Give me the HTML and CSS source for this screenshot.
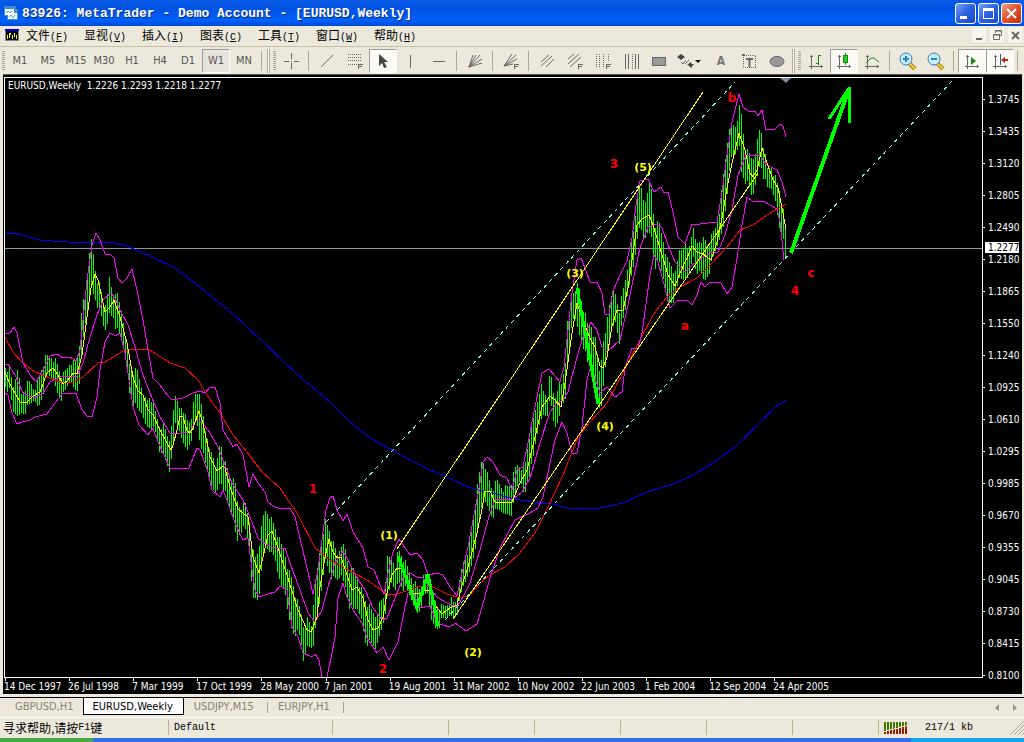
FILE: index.html
```html
<!DOCTYPE html>
<html lang="zh-CN">
<head>
<meta charset="utf-8">
<title>MetaTrader - [EURUSD,Weekly]</title>
<link rel="stylesheet" href="styles.css">
</head>
<body>
<div class="window">
  <header class="titlebar">
    <svg class="app-icon" width="16" height="16" viewBox="0 0 16 16"><path fill="#3a8ed0" d="M1 1h12v3h2v11H4v-4H1z"/><path fill="#fff" d="M2 4h9v6H2zM5 8h9v6H5z"/><path fill="none" stroke="#4aa0d8" d="M3 8l2-2 2 2 2-2M6 12l2-2 2 3 2-3"/></svg>
    <h1 class="title">83926: MetaTrader - Demo Account - [EURUSD,Weekly]</h1>
    <div class="win-buttons">
      <button class="win-btn" aria-label="最小化"><svg width="19" height="19" viewBox="0 0 19 19"><path fill="#fff" d="M4 12h7v3H4z"/></svg></button>
      <button class="win-btn" aria-label="最大化"><svg width="19" height="19" viewBox="0 0 19 19"><path fill="#fff" fill-rule="evenodd" d="M4 4h11v11H4zM5 7v7h9V7z"/></svg></button>
      <button class="win-btn win-close" aria-label="关闭"><svg width="19" height="19" viewBox="0 0 19 19"><path stroke="#fff" stroke-width="2" d="M5 5l9 9M14 5l-9 9"/></svg></button>
    </div>
  </header>

  <nav class="menubar">
    <svg class="doc-icon" width="14" height="12" viewBox="0 0 14 12" shape-rendering="crispEdges"><path fill="#888" d="M0 0h14v12H0z"/><path fill="#000" d="M1 2h12v9H1z"/><path fill="#00e" d="M0 0h14v2H0z"/><path stroke="#ff0" stroke-width="1" d="M2.500 6v4M4.500 4v5M5.500 4v2M7.500 6v4M9.500 4v4M11.500 6v4"/></svg>
    <button class="menu">文件<span class="key">(<u>F</u>)</span></button>
    <button class="menu">显视<span class="key">(<u>V</u>)</span></button>
    <button class="menu">插入<span class="key">(<u>I</u>)</span></button>
    <button class="menu">图表<span class="key">(<u>C</u>)</span></button>
    <button class="menu">工具<span class="key">(<u>T</u>)</span></button>
    <button class="menu">窗口<span class="key">(<u>W</u>)</span></button>
    <button class="menu">帮助<span class="key">(<u>H</u>)</span></button>
    <div class="mdi-buttons">
      <button class="mdi-btn" aria-label="最小化图表"><svg width="14" height="14" viewBox="0 0 14 14"><path fill="#6b695e" d="M4 10h6v2H4z"/></svg></button>
      <button class="mdi-btn" aria-label="还原图表"><svg width="14" height="14" viewBox="0 0 14 14"><path fill="none" stroke="#6b695e" d="M5.500 5V2.500h6v5H10M3.500 6.500h6v5h-6zM5 3h7M3 7h7"/></svg></button>
      <button class="mdi-btn" aria-label="关闭图表"><svg width="14" height="14" viewBox="0 0 14 14"><path stroke="#6b695e" stroke-width="2" d="M4 4l7 7M11 4l-7 7"/></svg></button>
    </div>
  </nav>

  <div class="toolbar">
    <span class="grip"></span>
    <button class="tool">M1</button><button class="tool">M5</button><button class="tool">M15</button><button class="tool">M30</button><button class="tool">H1</button><button class="tool">H4</button><button class="tool">D1</button><button class="tool tool-framed">W1</button><button class="tool">MN</button>
    <span class="sep"></span><span class="band-edge"></span><span class="grip"></span>
    <button class="tool" aria-label="十字线"><svg class="ico"><path d="M10.500 2v6M10.500 12v6M3 10.500h5M13 10.500h5M10.500 10v1"/></svg></button>
    <span class="sep"></span>
    <button class="tool" aria-label="趋势线"><svg class="ico"><path class="smooth" d="M4 16L16 4"/></svg></button>
    <button class="tool" aria-label="斐波纳契回调"><svg class="ico"><path class="dots" d="M3 3.500h13M3 6.500h13M3 9.500h13M3 13.500h9"/><path d="M13.500 18v-5h4M13.500 15.500h3"/></svg></button>
    <button class="tool tool-active" aria-label="光标"><svg class="ico"><path class="solid dark" d="M6 3v12l3-3 2 5 3-1-3-5h4z"/></svg></button>
    <button class="tool" aria-label="垂直线"><svg class="ico"><path d="M9.500 4v13"/></svg></button>
    <button class="tool" aria-label="水平线"><svg class="ico"><path d="M4 10.500h12"/></svg></button>
    <span class="sep"></span>
    <button class="tool" aria-label="江恩扇形线"><svg class="ico"><path class="smooth" d="M4 16L8 4M4 16l7-12M4 16L15 4M4 16l13-8M4 16l13-4"/><path class="red" d="M3 15.500h2"/></svg></button>
    <span class="sep"></span>
    <button class="tool" aria-label="斐波纳契扇形线"><svg class="ico"><path class="smooth" d="M3 15L11 3M3 15L15 4M3 15l13-7M3 15l9-2"/><path d="M13.500 18v-5h4M13.500 15.500h3"/></svg></button>
    <span class="sep"></span>
    <button class="tool" aria-label="等距通道"><svg class="ico"><path class="smooth" d="M4 11l8-7M4 15L15 5M9 16l8-8"/></svg></button>
    <button class="tool" aria-label="斐波纳契通道"><svg class="ico"><path class="smooth" d="M3 8l6-5M3 13L14 3M5 16L16 6"/><path d="M13.500 18v-5h4M13.500 15.500h3"/></svg></button>
    <button class="tool" aria-label="斐波纳契时间区间"><svg class="ico"><path class="dots" d="M3.500 3v14M6.500 3v14M10.500 3v14M15.500 3v8"/><path d="M13.500 18v-5h4M13.500 15.500h3"/></svg></button>
    <button class="tool" aria-label="周期线"><svg class="ico"><path d="M4.500 3v15M7.500 3v15M14.500 3v15M17.500 3v15"/><path class="dots" d="M11.500 3v15"/></svg></button>
    <button class="tool" aria-label="矩形"><svg class="ico"><rect class="shape" x="3.500" y="6.500" width="13" height="8"/></svg></button>
    <button class="tool tool-wide" aria-label="箭头标记"><svg class="ico ico-wide"><path class="solid dark" d="M0 6l4-3 4 3-4 3zM10 13h7l-3 4zM11 14l2-3 3 3z"/><path class="smooth" d="M4 11l2 2 3-4M8 13l4-4"/><path class="solid black" d="M18 9h6l-3 3z"/></svg></button>
    <button class="tool tool-letter">A</button>
    <button class="tool" aria-label="文字标签"><svg class="ico"><path class="dots" d="M4.500 4.500h12v12h-12z"/><path class="solid" d="M3 3h3v2H3zM7 7h7v2h-2.500v7h-2V9H7z"/></svg></button>
    <button class="tool" aria-label="椭圆"><svg class="ico"><ellipse class="shape" cx="10" cy="10.500" rx="7" ry="5"/></svg></button>
    <span class="band-edge"></span><span class="grip"></span>
    <button class="tool" aria-label="柱状图"><svg class="ico"><path d="M5.500 4v14M3 15.500h14M4 5.500h3M15.500 14v3"/><path class="green" d="M12.500 4v10M13 4.500h2M10 12.500h3"/></svg></button>
    <button class="tool tool-active" aria-label="蜡烛图"><svg class="ico"><path d="M5.500 4v14M3 15.500h14M4 5.500h3M15.500 14v3"/><path class="green" d="M11.500 2v12"/><rect class="candle" x="9.500" y="4.500" width="4" height="7"/></svg></button>
    <button class="tool" aria-label="线形图"><svg class="ico"><path d="M5.500 4v14M3 15.500h14M4 5.500h3M15.500 14v3"/><path class="green smooth" d="M4 12l5-5 3 0 5 4"/></svg></button>
    <span class="sep"></span>
    <button class="tool" aria-label="放大"><svg class="ico"><path stroke="#a67a12" stroke-width="4" class="handle" d="M11 12l6 6"/><path class="handle" stroke="#f5d340" stroke-width="2" d="M11 12l6 6"/><circle class="lens" cx="8" cy="8" r="6"/><path class="lens" d="M5 8h6M8 5v6"/></svg></button>
    <button class="tool" aria-label="缩小"><svg class="ico"><path stroke="#a67a12" stroke-width="4" class="handle" d="M11 12l6 6"/><path class="handle" stroke="#f5d340" stroke-width="2" d="M11 12l6 6"/><circle class="lens" cx="8" cy="8" r="6"/><path class="lens" d="M5 8h6"/></svg></button>
    <span class="sep"></span>
    <button class="tool tool-active" aria-label="自动滚动"><svg class="ico"><path d="M5.500 4v14M3 15.500h14M4 5.500h3M15.500 14v3"/><path class="solid green-fill" d="M9 6l5 4-5 4z"/></svg></button>
    <button class="tool tool-active" aria-label="图表平移"><svg class="ico"><path d="M5.500 4v14M3 15.500h14M4 5.500h3M15.500 14v3"/><path class="blue" d="M10.500 3v11"/><path class="solid red-fill" d="M11 9l4-3v2h3v2h-3v2z"/></svg></button>
    <span class="sep"></span>
  </div>

  <main class="chart">
    <div class="plot">
      <p class="quote">EURUSD,Weekly&nbsp; 1.2226 1.2293 1.2218 1.2277</p>
      <svg class="series" viewBox="5 78 977 599" preserveAspectRatio="none" role="img" aria-label="EURUSD Weekly">
        <path fill="#7b8799" d="M780 78h11l-5 5z"/>
        <path stroke="#8a9a9a" d="M5 248.500H982"/>
        <path id="bars" class="bars"/>
        <g class="lines">
          <polyline stroke="#00f" points="5,233 13,233 22,235 40,240 52,241 68,242 110,242 127,246 150,256 175,268 200,287 213,298 233,314 260,339 286,364 305,381 330,402 350,422 370,438 390,449 410,460 430,470 447,477 457,482 473,489 493,493 513,499 540,503 553,504 567,508 600,508 623,503 647,492 673,484 693,475 710,465 735,447 761,422 775,407 786,400"/>
          <polyline stroke="#f00" points="5,337 13,352 23,363 35,372 50,378 60,382 72,383 83,377 98,363 105,362 123,351 137,349 150,350 170,363 185,368 198,380 207,395 220,413 233,435 247,452 262,472 280,488 297,513 315,548 330,560 343,567 367,580 387,594 397,594 412,589 420,586 433,587 447,594 460,598 470,595 480,583 490,575 505,567 520,553 535,533 547,509 563,475 578,437 590,422 607,403 623,373 640,340 653,315 667,297 680,287 697,278 710,265 727,247 740,230 753,225 767,215 786,204"/>
          <g stroke="#f0f">
            <polyline points="5,334 10,333 14,327 17,333 23,363 30,375 36,382 42,372 50,356 57,354 63,358 70,357 76,361 80,350 83,320 87,280 92,245 96,233 100,240 105,254 110,254 114,258 118,278 122,283 127,278 132,269 137,290 143,320 148,350 153,378 160,385 167,395 172,400 183,398 193,393 200,391 205,393 210,387 215,387 220,403 223,430 233,447 237,444 243,455 249,487 253,474 258,483 265,492 268,502 273,506 280,509 290,508 295,517 302,547 308,572 313,594 318,570 322,540 326,510 330,498 333,496 337,510 343,521 347,514 353,532 363,548 368,567 374,570 380,585 384,594 388,573 393,552 399,539 403,545 410,555 417,553 423,560 428,575 437,573 443,575 450,587 457,596 462,573 468,547 475,510 480,483 483,462 487,457 493,462 500,475 507,478 512,490 517,470 523,467 528,443 535,407 542,373 549,369 555,376 560,382 564,367 568,330 572,293 577,260 581,258 585,268 590,282 597,282 602,293 605,314 609,314 613,291 620,275 627,261 632,238 636,205 640,181 648,179 654,192 661,187 664,193 668,192 673,212 678,237 685,244 692,224 700,224 717,222 722,192 727,155 732,122 739,94 743,107 748,111 755,111 758,116 762,110 766,130 775,129 780,124 783,126 786,137"/>
            <polyline points="5,364 8,364 15,375 23,393 35,398 43,393 50,382 62,376 77,376 83,363 90,337 97,315 103,300 111,293 115,298 120,310 128,325 135,347 143,375 152,398 160,417 170,433 182,433 190,432 197,419 202,422 210,433 218,447 225,465 232,483 243,500 250,517 258,538 267,545 275,548 285,548 290,563 300,590 308,613 315,622 322,610 328,587 335,563 343,551 348,560 357,578 365,590 373,608 382,620 387,618 393,603 403,578 410,573 417,577 423,578 430,588 437,597 447,603 457,607 463,597 470,583 480,550 488,520 495,499 513,499 522,492 530,478 540,443 550,412 557,403 563,400 568,392 577,357 583,337 591,322 597,330 602,347 607,352 620,340 628,305 632,285 640,248 648,227 657,224 662,228 668,245 675,262 685,272 692,265 702,258 710,253 718,252 725,235 732,210 738,175 746,155 760,156 767,165 777,170 782,182 786,197"/>
            <polyline points="5,393 8,395 12,413 17,424 22,422 30,420 35,417 47,414 55,403 63,393 76,393 82,410 87,416 92,417 97,397 100,370 105,342 110,333 116,336 120,333 125,353 130,387 133,407 139,425 148,435 153,428 158,442 165,457 170,468 189,468 197,448 200,450 208,472 212,490 220,497 223,490 228,503 235,523 243,540 248,538 252,570 255,590 259,597 268,594 275,592 280,586 287,590 292,627 298,637 303,653 312,657 315,654 319,660 322,677 327,677 332,653 335,637 338,598 343,583 347,597 353,610 362,623 367,638 377,653 383,647 389,660 393,652 398,642 403,617 408,593 412,590 420,608 430,606 437,623 443,625 450,627 455,623 466,631 477,624 482,607 490,578 500,548 515,520 530,513 538,508 543,497 550,463 555,440 562,422 567,433 572,453 577,453 582,427 587,380 591,365 600,393 607,387 615,397 622,392 625,368 632,348 638,348 642,333 647,297 650,275 654,255 658,262 665,288 670,308 678,300 687,300 692,305 697,295 701,282 705,287 710,282 721,283 727,294 732,287 737,258 742,225 747,197 752,201 763,201 777,209 780,222 784,260"/>
          </g>
          <g stroke="#ff0">
            <polyline points="5,373 12,388 20,402 26,403 33,396 40,392 47,373 53,368 58,375 63,384 68,380 73,373 77,374 82,355 87,317 91,288 95,274 98,280 105,312 110,307 114,300 120,317 127,343 133,377 138,391 143,395 148,410 153,415 160,430 167,443 171,450 173,445 177,430 180,416 183,417 187,431 190,433 193,428 199,411 203,423 210,457 217,471 223,466 225,468 230,487 238,509 248,517 253,557 259,573 263,557 268,535 272,531 278,548 287,575 298,610 307,630 311,632 317,617 320,587 325,557 329,539 333,552 337,558 341,557 347,575 352,590 357,587 363,598 368,620 373,630 378,628 383,617 387,593 392,575 397,568 402,568 407,577 413,593 420,593 425,590 430,591 435,605 442,614 450,608 457,605 462,585 468,567 477,533 482,509 485,491 490,491 495,502 512,502 520,483 527,470 535,437 542,407 550,396 555,400 561,407 565,383 572,333 577,303 583,320 590,338 595,347 600,366 603,368 607,357 612,326 617,310 623,310 628,288 633,253 637,225 642,219 649,215 653,225 660,248 668,275 675,286 680,273 687,258 692,246 697,252 703,254 711,260 717,242 722,218 727,188 732,163 737,142 739,133 745,150 750,173 753,177 757,170 762,148 767,163 773,180 778,188 782,208 786,229"/>
            <path d="M397 549L703 92M453 619L758 173"/>
          </g>
          <path stroke="#7fffd4" stroke-dasharray="4 4" d="M326 522L735 82M445 620L953 80"/>
          <g stroke="#0f0" stroke-width="3">
            <path d="M398 556L417 608L428 574L438 626"/>
            <path d="M577 288L598 404"/>
            <path stroke-width="4" d="M791 253L849 89"/>
            <path d="M849.500 87V123M849 88L829 119"/>
          </g>
        </g>
        <g class="wave-yellow">
          <text x="389" y="539">(1)</text><text x="473" y="656">(2)</text><text x="575" y="277">(3)</text><text x="605" y="430">(4)</text><text x="643" y="171">(5)</text>
        </g>
        <g class="wave-red">
          <text x="313" y="493">1</text><text x="383" y="673">2</text><text x="614" y="168">3</text><text x="795" y="295">4</text><text x="685" y="330">a</text><text x="732" y="102">b</text><text x="811" y="277">c</text>
        </g>
      </svg>
    </div>
    <ol class="dates">
      <li>14 Dec 1997</li><li>26 Jul 1998</li><li>7 Mar 1999</li><li>17 Oct 1999</li><li>28 May 2000</li><li>7 Jan 2001</li><li>19 Aug 2001</li><li>31 Mar 2002</li><li>10 Nov 2002</li><li>22 Jun 2003</li><li>1 Feb 2004</li><li>12 Sep 2004</li><li>24 Apr 2005</li>
    </ol>
    <div class="scale">
      <ol class="prices">
        <li>1.3745</li><li>1.3435</li><li>1.3120</li><li>1.2805</li><li>1.2490</li><li>1.2180</li><li>1.1865</li><li>1.1550</li><li>1.1240</li><li>1.0925</li><li>1.0610</li><li>1.0295</li><li>0.9985</li><li>0.9670</li><li>0.9355</li><li>0.9045</li><li>0.8730</li><li>0.8415</li><li>0.8100</li>
      </ol>
      <span class="last-price">1.2277</span>
    </div>
  </main>

  <nav class="tabs">
    <button class="tab tab-first">GBPUSD,H1</button>
    <button class="tab tab-active">EURUSD,Weekly</button>
    <button class="tab">USDJPY,M15</button>
    <button class="tab">EURJPY,H1</button>
    <div class="tab-scroll">
      <button class="scroll-btn" aria-label="向左"><svg width="5" height="8" viewBox="0 0 5 8"><path fill="#96958d" d="M4 0v7L0 4z"/></svg></button>
      <button class="scroll-btn" aria-label="向右"><svg width="5" height="8" viewBox="0 0 5 8"><path fill="#96958d" d="M1 0v7l4-3z"/></svg></button>
    </div>
  </nav>

  <footer class="status">
    <span class="cell cell-help">寻求帮助,请按<span class="key">F1</span>键</span>
    <span class="cell">Default</span>
    <span class="cell"></span><span class="cell"></span><span class="cell"></span><span class="cell"></span><span class="cell"></span><span class="cell"></span>
    <span class="cell cell-net">
      <svg width="24" height="12" viewBox="0 0 24 12" shape-rendering="crispEdges"><path fill="none" stroke="#3f7a00" stroke-width="12" stroke-dasharray="2 1" d="M0 6h24"/><path fill="none" stroke="#a01800" stroke-width="2" d="M1 12v-2M4 12v-3M7 12v-4M10 12v-5M13 12v-6M16 12v-7M19 12v-7M22 12v-9"/><path fill="none" stroke="#ece9d8" d="M0 9.500L24 3.500"/></svg>
      <span>217/1 kb</span>
      <svg class="resize" width="14" height="14" viewBox="0 0 14 14"><path stroke="#a9a795" stroke-width="1" d="M0 14L14 0M4 14L14 4M8 14l6-6M12 14l2-2"/></svg>
    </span>
  </footer>
  <div class="taskbar"><span class="start"></span><span class="tray"></span></div>
</div>
<script src="chart.js"></script>
</body>
</html>
```
FILE: styles.css
```css
* { box-sizing: border-box; }
body {
  margin: 0;
  font-family: "DejaVu Sans Condensed", "DejaVu Sans", "Noto Sans CJK SC", sans-serif;
  font-size: 10px;
}
button { font: inherit; color: inherit; background: none; border: 0; padding: 0; margin: 0; }
ol { list-style: none; margin: 0; padding: 0; }
svg { display: block; }
.window { display: flex; flex-direction: column; height: 100vh; background: #ece9dc; }

.titlebar {
  display: flex; align-items: center; height: 26px; padding: 0 2px;
  background: linear-gradient(#0a5ae8, #0052e0 30%, #0060fa 80%, #0048d0);
}
.app-icon { margin: 0 3px 0 1px; }
.title {
  flex: 1; margin: 0; color: #fff; white-space: nowrap;
  font: bold 13px "Liberation Mono", monospace; text-shadow: 1px 1px #0a2a80;
}
.win-buttons { display: flex; gap: 2px; }
.win-btn {
  width: 21px; height: 21px; border: 1px solid #fff; border-radius: 3px;
  background: linear-gradient(135deg, #7aa0f0, #2a5fe0 50%, #1c4cc8);
}
.win-close { background: linear-gradient(135deg, #f0a080, #e0502a 50%, #c03010); }

.menubar {
  display: flex; align-items: center; height: 21px; padding: 0 2px 3px 5px;
  border-bottom: 1px solid #c3c2a8; font: 12px "Noto Sans CJK SC", sans-serif;
}
.doc-icon { margin-right: 7px; }
.menu { width: 58px; text-align: left; white-space: nowrap; line-height: 17px; }
.key { font: 10px "Liberation Mono", monospace; }
.mdi-buttons { display: flex; gap: 4px; margin-left: auto; }
.mdi-btn { width: 14px; height: 14px; background: #f6f5ee; }

.toolbar { display: flex; align-items: center; height: 27px; padding: 0 0 0 1px; color: #555; }
.grip {
  width: 3px; height: 20px; margin: 0 1px;
  background: repeating-linear-gradient(#a5a493 0 1px, transparent 1px 2px);
}
.tool {
  width: 28px; height: 24px; border: 1px solid transparent; flex: none;
  display: flex; align-items: center; justify-content: center; font-size: 11px;
}
.tool-wide { width: 34px; }
.tool-framed, .tool-active { border-color: #9d9c94 #fff #fff #9d9c94; }
.tool-framed { background: #e6e4dc; }
.tool-active { background: #fbfaf4; }
.tool-letter { font-weight: bold; font-size: 12px; color: #777; }
.sep { width: 1px; height: 20px; margin: 0 4px 0 3px; background: #aaa998; flex: none; }
.band-edge { width: 3px; height: 24px; margin: 0 2px 0 1px; border: solid #aeada0; border-width: 0 1px; background: #fff; flex: none; }
.ico { width: 20px; height: 20px; fill: none; stroke: #666; shape-rendering: crispEdges; }
.ico-wide { width: 26px; }
.ico .smooth, .ico .solid, .ico .handle, .ico .lens, .ico ellipse { shape-rendering: auto; }
.ico .dots { stroke-dasharray: 1 1; }
.ico .solid { fill: #666; stroke: none; }
.ico .dark { fill: #444; }
.ico .black { fill: #000; }
.ico .shape { fill: #999; }
.ico .red { stroke: #d03020; }
.ico .green { stroke: #108a10; }
.ico .candle { fill: #20d020; stroke: #108a10; }
.ico .green-fill { fill: #108a10; }
.ico .red-fill { fill: #c02808; }
.ico .blue { stroke: #246090; }
.ico .lens { fill: #c8ecfa; stroke: #2b86c0; }
.ico path.lens { stroke-width: 2; }

.chart {
  flex: 1; min-height: 0; display: grid;
  grid-template: minmax(0, 1fr) 16px / minmax(0, 1fr) 39px;
  margin: 0 2px 3px 3px; padding: 2px 0 0 1px; background: #000; color: #fff;
  border-top: 1px solid #5c5a50;
}
.plot { position: relative; border: 1px solid #fff; }
.series { width: 100%; height: 100%; }
.quote { position: absolute; left: 3px; top: 2px; margin: 0; line-height: 12px; white-space: nowrap; }
.bars { stroke: #0f0; fill: none; shape-rendering: crispEdges; }
.lines { fill: none; shape-rendering: crispEdges; }
.wave-yellow, .wave-red { font: bold 11px "DejaVu Sans", sans-serif; text-anchor: middle; }
.wave-yellow { fill: #ff0; }
.wave-red { fill: #f00; font-size: 12px; }

.dates { grid-row: 2; display: flex; }
.dates li { position: relative; flex: none; width: 6.55%; line-height: 17px; white-space: nowrap; }
.dates li::before { content: ""; position: absolute; left: 1px; top: 0; width: 1px; height: 3px; background: #fff; }
.scale { grid-column: 2; grid-row: 1 / 3; position: relative; display: flex; padding: 6px 0 3px; }
.prices { flex: 1; display: flex; flex-direction: column; }
.prices li { flex: 1; display: flex; align-items: center; gap: 3px; }
.prices li::before { content: ""; width: 2px; height: 1px; background: #fff; }
.last-price { position: absolute; left: 2px; top: 26.700%; width: 34px; padding-left: 3px; line-height: 11px; background: #fff; color: #000; }

.tabs { display: flex; height: 20px; border-top: 1px solid #000; color: #85836f; font-size: 11px; }
.tab { position: relative; padding: 0 14px 0 10px; margin-bottom: 2px; white-space: nowrap; }
.tab::after { content: ""; position: absolute; right: 0; top: 4px; height: 11px; width: 1px; background: #a9a78c; }
.tab-first { padding-left: 15px; padding-right: 10px; }
.tab-first::after { display: none; }
.tab-active { padding: 0 10px 0 8px; background: #fff; color: #000; border: solid #000; border-width: 0 1px 1px; }
.tab-active::after { display: none; }
.tab-scroll { display: flex; gap: 12px; margin-left: auto; padding-right: 7px; align-items: center; }

.status {
  display: grid; grid-template-columns: 168px 164px 116px 86px 86px 86px 86px 86px 1fr;
  height: 21px; padding-top: 2px; border-top: 1px solid #fff;
  font: 10px "Liberation Mono", "Noto Sans CJK SC", monospace;
}
.cell { display: flex; align-items: center; padding-left: 5px; margin: 0 0 3px; border-left: 1px solid #b5b493; white-space: nowrap; }
.cell-help { border: 0; padding-left: 3px; font: 12px/15px "Noto Sans CJK SC", sans-serif; }
.cell-net { gap: 17px; }
.resize { margin-left: auto; align-self: flex-end; }

.taskbar { display: flex; justify-content: space-between; height: 4px; background: #2f6fe8; }
.start { width: 94px; background: #4aa845; border-radius: 0 4px 0 0; }
.tray { width: 11%; background: #12a8f0; }
```
FILE: chart.js
```js
// Weekly price ranges: x, top and bottom of the bar in plot units.
const ranges = [
  [5,367,384],[9,371,392],[13,387,414],[17,366,416],[21,395,411],[26,386,410],[30,382,406],[34,388,401],[38,379,406],[42,366,394],[46,357,376],[50,355,379],[54,359,382],[58,367,394],[62,378,398],[66,370,391],[70,360,380],[74,363,388],[78,355,388],[80,330,372],[82,304,350],[84,297,330],[86,290,322],[88,262,312],[90,236,281],[93,255,292],[96,278,300],[100,288,314],[104,310,332],[106,295,330],[109,280,312],[113,295,315],[115,291,325],[118,300,335],[122,315,343],[126,340,360],[129,365,391],[133,372,402],[137,372,411],[142,390,415],[146,403,425],[150,395,425],[155,413,435],[159,425,453],[163,425,453],[167,435,463],[170,440,471],[172,420,455],[175,396,425],[178,400,428],[182,415,440],[186,412,445],[190,430,450],[193,402,432],[196,387,420],[200,400,445],[204,420,452],[208,450,480],[212,452,490],[216,468,492],[220,440,478],[224,463,490],
  [227,470,505],[230,480,512],[234,472,520],[236,500,542],[240,508,528],[245,505,532],[249,520,548],[252,545,598],[254,560,595],[258,550,598],[261,530,575],[264,511,545],[268,512,552],[272,522,550],[276,530,560],[280,545,590],[284,550,590],[288,570,615],[292,580,630],[296,600,632],[300,610,640],[303,625,662],[307,620,645],[311,625,645],[314,590,640],[317,570,617],[320,545,600],[323,530,575],[325,522,558],[329,530,570],[333,545,580],[337,555,582],[341,543,575],[345,550,585],[349,570,605],[353,570,612],[357,575,610],[361,590,618],[365,600,640],[370,610,645],[375,615,650],[379,605,635],[383,597,620],[387,560,600],[391,557,585],[395,565,590],[398,550,580],[402,557,585],[408,570,595],[413,580,605],[418,590,612],[422,580,600],[427,573,595],[431,590,620],[436,605,627],[441,608,622],[446,605,620],[450,598,615],[454,605,615],[458,590,610],[462,564,590],[466,555,580],[470,540,568],[474,510,550],[478,480,530],[481,462,510],[484,460,500],
  [487,475,505],[492,490,515],[497,482,512],[503,488,513],[508,487,512],[512,480,512],[516,465,490],[520,465,480],[524,470,495],[528,440,475],[532,425,465],[536,405,440],[540,385,420],[543,392,413],[547,395,412],[550,372,402],[554,400,430],[558,383,420],[561,385,405],[565,360,395],[567,325,370],[571,300,330],[574,287,315],[578,285,330],[582,305,340],[587,325,365],[591,325,370],[595,340,380],[599,370,405],[602,350,400],[605,335,370],[608,308,350],[611,292,330],[615,295,320],[619,310,340],[622,295,325],[625,280,312],[628,262,290],[631,245,275],[634,225,260],[637,195,235],[640,185,230],[644,205,242],[648,183,230],[651,190,235],[654,225,265],[659,225,265],[663,240,280],[667,260,300],[671,265,300],[675,275,298],[679,250,280],[683,245,280],[688,250,275],[692,228,255],[696,245,278],[700,238,270],[704,240,280],[708,245,272],[712,235,262],[716,225,250],[719,210,240],[723,175,225],[727,140,190],[731,125,160],[735,125,155],[739,108,145],[741,115,170],[745,150,180],[749,155,190],[752,160,200],[756,147,180],[760,125,160],[763,145,175],[767,170,190],[771,165,190],[775,178,200],[779,190,225],[782,205,235],[785,230,260]
];
let path = "";
let k = 0;
for (let x = 5; x <= 785; x += 2) {
  while (k < ranges.length - 2 && ranges[k + 1][0] < x) k++;
  const [x0, h0, l0] = ranges[k];
  const [x1, h1, l1] = ranges[k + 1];
  const t = (x - x0) / (x1 - x0);
  const wobble = (x * 37) % 9 - 4;
  const top = Math.round(h0 + (h1 - h0) * t + wobble);
  const bottom = Math.round(l0 + (l1 - l0) * t + (x * 23) % 9 - 4);
  path += `M${x}.5 ${top}V${bottom}`;
}
document.getElementById("bars").setAttribute("d", path);
```
